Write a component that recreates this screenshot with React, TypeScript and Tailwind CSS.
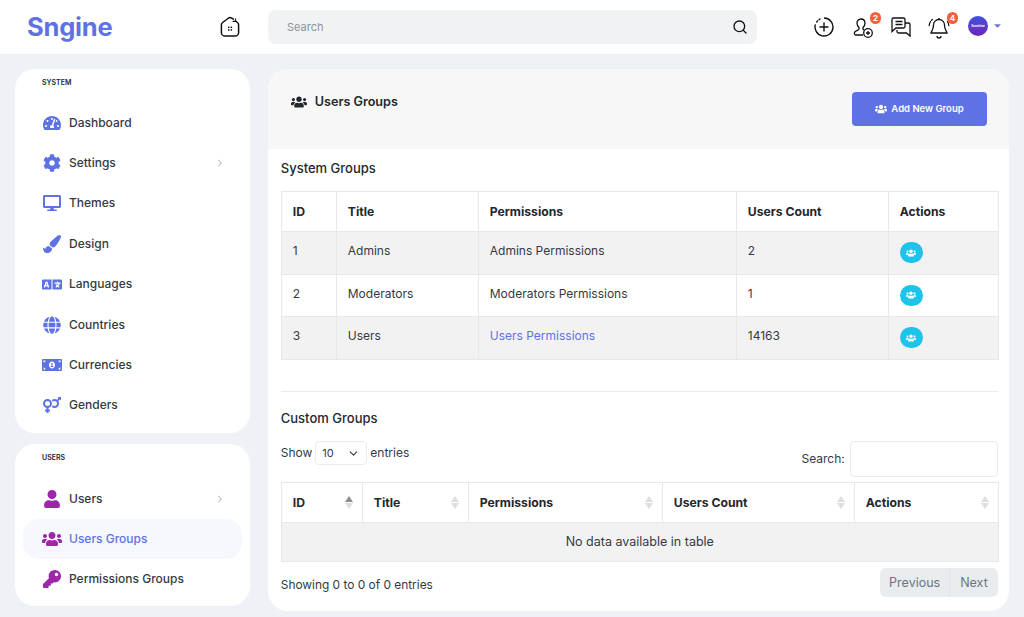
import { ReactNode } from "react";
import {
  FaTachometerAlt,
  FaCog,
  FaDesktop,
  FaPaintBrush,
  FaLanguage,
  FaGlobe,
  FaMoneyBillAlt,
  FaVenusMars,
  FaUser,
  FaUsers,
  FaKey,
  FaChevronRight,
  FaCaretDown,
} from "react-icons/fa";
import { ChevronDown, Search } from "lucide-react";
import type { IconType } from "react-icons";

const systemLinks: { label: string; icon: IconType; arrow?: boolean; size?: number }[] = [
  { label: "Dashboard", icon: FaTachometerAlt },
  { label: "Settings", icon: FaCog, arrow: true },
  { label: "Themes", icon: FaDesktop },
  { label: "Design", icon: FaPaintBrush },
  { label: "Languages", icon: FaLanguage, size: 21 },
  { label: "Countries", icon: FaGlobe },
  { label: "Currencies", icon: FaMoneyBillAlt, size: 20 },
  { label: "Genders", icon: FaVenusMars },
];

const userLinks: { label: string; icon: IconType; arrow?: boolean; active?: boolean; size?: number }[] = [
  { label: "Users", icon: FaUser, arrow: true },
  { label: "Users Groups", icon: FaUsers, active: true, size: 20 },
  { label: "Permissions Groups", icon: FaKey },
];

const systemGroups = [
  { id: 1, title: "Admins", permissions: "Admins Permissions", count: 2 },
  { id: 2, title: "Moderators", permissions: "Moderators Permissions", count: 1 },
  { id: 3, title: "Users", permissions: "Users Permissions", count: 14163, link: true },
];

function Badge({ children }: { children: ReactNode }) {
  return (
    <span className="absolute -right-[2px] -top-[3px] flex h-[12px] w-[11px] items-center justify-center rounded-full bg-[#f2603c] text-[8px] font-bold leading-none text-white">
      {children}
    </span>
  );
}

function SideLink({
  label,
  icon: Icon,
  arrow,
  active,
  color,
  size = 18,
}: {
  label: string;
  icon: IconType;
  arrow?: boolean;
  active?: boolean;
  color: string;
  size?: number;
}) {
  return (
    <div
      className={`flex h-[40.4px] items-center rounded-2xl pl-[19px] pr-[18px] ${active ? "bg-[#f5f8fd] text-[#5e72e4]" : "text-[#333a44]"}`}
    >
      <span className={`flex w-[20px] justify-center ${color}`}>
        <Icon size={size} />
      </span>
      <span className="ml-[7px] flex-1 text-[12px] font-medium">{label}</span>
      {arrow && <FaChevronRight size={8} className="text-[#c4c8cc]" />}
    </div>
  );
}

function SortHead({ label, width, asc }: { label: string; width: string; asc?: boolean }) {
  return (
    <th className={`${width} relative border border-[#e6e8eb] pl-[11px] pt-[1px] text-left text-[12.2px] font-bold text-[#23272e]`}>
      {label}
      <span className="absolute right-[9px] top-[13px] flex flex-col items-center gap-[1px]">
        <span className={`h-0 w-0 border-x-[4px] border-b-[6px] border-x-transparent ${asc ? "border-b-[#8a8d91]" : "border-b-[#dcdee0]"}`} />
        <span className="h-0 w-0 border-x-[4px] border-t-[6px] border-x-transparent border-t-[#dcdee0]" />
      </span>
    </th>
  );
}

export default function App() {
  return (
    <div className="h-[617px] overflow-hidden bg-[#eef1f6] font-['Inter','Noto_Sans',sans-serif] text-[#333a44]">
      {/* Header */}
      <header className="flex h-[54px] items-center bg-white">
        <div className="w-[219px] pl-[27px] text-[25.5px] font-bold leading-none tracking-[-0.2px] text-[#5e72e4]">Sngine</div>
        <div className="flex w-[49px] justify-start">
          <svg width="22" height="22" viewBox="0 0 22 22" fill="none" stroke="#111" strokeWidth="1.5">
            <path d="M14.5 3.2 12.4 2a2.6 2.6 0 0 0-2.8 0L3.6 6.5A3 3 0 0 0 2.4 9v7.5a3.6 3.6 0 0 0 3.6 3.6h10a3.6 3.6 0 0 0 3.6-3.6V9a3 3 0 0 0-1.2-2.5l-1.2-1" strokeLinecap="round" />
            <path d="M16.6 2.4v3h-3" strokeWidth="1.1" />
            <g fill="#111" stroke="none">
              <rect x="9" y="10.6" width="1.5" height="1.5" />
              <rect x="11.6" y="10.6" width="1.5" height="1.5" />
              <rect x="9" y="13.2" width="1.5" height="1.5" />
              <rect x="11.6" y="13.2" width="1.5" height="1.5" />
            </g>
          </svg>
        </div>
        <div className="flex h-[34px] w-[489px] items-center justify-between rounded-lg bg-[#f1f2f3] pl-[19px] pr-[9px]">
          <span className="text-[11px] text-[#8f9296]">Search</span>
          <Search size={16} className="text-[#111]" />
        </div>
        <div className="ml-[57px] flex items-center">
          <svg width="20" height="20" viewBox="0 0 20 20" fill="none" stroke="#111" strokeWidth="1.4">
            <path d="M10 1a9 9 0 1 1-8.6 6.4" />
            <path d="M2.7 5 3.6 3.9M5 2.7l1-.7" strokeLinecap="round" />
            <path d="M10 6v8M6 10h8" strokeLinecap="round" />
          </svg>
          <div className="relative ml-[19px] h-[24px] w-[26px]">
            <svg width="22" height="22" viewBox="0 0 22 22" fill="none" stroke="#111" strokeWidth="1.3" className="mt-[2px]">
              <path d="M8 2c2.6 0 4 2 4 4.2 0 2-1 3.5-2 4.4v1.4c0 .6.6 1 1.2 1.2M8 2C5.4 2 4 4 4 6.2c0 2 1 3.5 2 4.4V12c0 1-3 1.5-4.200 3-.6.8-.6 3 .6 3H10" />
              <circle cx="15" cy="16" r="4.300" />
              <path d="M15 14v4M13 16h4" />
            </svg>
            <Badge>2</Badge>
          </div>
          <svg width="22" height="22" viewBox="0 0 22 22" fill="none" stroke="#111" strokeWidth="1.3" className="ml-[11px]">
            <path d="M3.500 2h10A1.500 1.500 0 0 1 15 3.500v7a1.500 1.500 0 0 1-1.500 1.500H6l-4 3.500V3.500A1.500 1.500 0 0 1 3.500 2Z" />
            <path d="M5.500 5.500h7M5.500 8.500h7" />
            <path d="M15 7h3.500A1.500 1.500 0 0 1 20 8.500V20l-3.500-3H8.500A1.500 1.500 0 0 1 7 15.500V14" />
          </svg>
          <div className="relative ml-[16px] h-[24px] w-[28px]">
            <svg width="22" height="22" viewBox="0 0 22 22" fill="none" stroke="#111" strokeWidth="1.3" className="mt-[2px]">
              <path d="M11 2.500a5.500 5.500 0 0 0-5.500 5.500c0 5-2 6-2.500 8h16c-.5-2-2.500-3-2.500-8A5.500 5.500 0 0 0 11 2.500Z" />
              <path d="M9 19a2 2 0 0 0 4 0M11 1v1.500" />
              <path d="M2.500 4.500C1.700 5.800 1.300 7 1.200 8.500M4.300 2.500 3.600 3.200M19.500 4.500c.8 1.300 1.200 2.500 1.300 4" strokeLinecap="round" />
            </svg>
            <Badge>4</Badge>
          </div>
          <div className="ml-[12px] -mt-[2px] flex h-[20px] w-[20px] items-center justify-center rounded-full bg-gradient-to-b from-[#3b4fe0] to-[#6d22b8] text-[3px] font-bold text-white">
            Sunshine
          </div>
          <FaCaretDown size={11} className="-mt-[3px] ml-[4px] text-[#6e78d8]" />
        </div>
      </header>

      <div className="flex gap-[18px] px-[15px] pt-[15px]">
        {/* Sidebar */}
        <aside className="flex w-[235px] flex-col gap-[11px]">
          <div className="h-[364px] rounded-[20px] bg-white px-[8px] pt-[10px]">
            <div className="pb-[15px] pl-[19px] text-[7px] font-semibold leading-[8px] text-[#23272e]">SYSTEM</div>
            <div className="pt-[0.5px]">
              {systemLinks.map((l) => (
                <SideLink key={l.label} {...l} color="text-[#5e72e4]" />
              ))}
            </div>
          </div>
          <div className="h-[162px] rounded-[20px] bg-white px-[8px] pt-[10px]">
            <div className="pb-[15px] pl-[19px] text-[7px] font-semibold leading-[8px] text-[#23272e]">USERS</div>
            <div className="pt-[1.5px]">
              {userLinks.map((l) => (
                <SideLink key={l.label} {...l} color="text-[#9c27a8]" />
              ))}
            </div>
          </div>
        </aside>

        {/* Main */}
        <main className="h-[542px] w-[742px] overflow-hidden rounded-[20px] bg-white">
          <div className="flex h-[80px] justify-between bg-[#f7f7f7] pl-[23px] pr-[23px]">
            <div className="flex items-center gap-[8px] self-start pt-[24px] text-[12.6px] font-semibold text-[#23272e]">
              <FaUsers size={16} />
              Users Groups
            </div>
            <div className="mr-[-1px] mt-[23px] flex h-[34px] w-[135px] items-center justify-center gap-[4px] rounded bg-[#5e72e4] text-[9.5px] font-semibold text-white">
              <FaUsers size={12} />
              Add New Group
            </div>
          </div>

          <div className="px-[13px]">
            <div className="flex h-[32px] items-end pb-[3px] text-[13px] font-medium text-[#23272e]">System Groups</div>
            <table className="mt-[10px] w-[717px] table-fixed border-collapse text-[12px]">
              <thead>
                <tr className="h-[40px]">
                  {[
                    ["ID", "w-[55px]"],
                    ["Title", "w-[142px]"],
                    ["Permissions", "w-[258px]"],
                    ["Users Count", "w-[152px]"],
                    ["Actions", "w-[110px]"],
                  ].map(([h, w]) => (
                    <th key={h} className={`${w} border border-[#e6e8eb] pl-[11px] pt-[1px] text-left text-[12.2px] font-bold text-[#23272e]`}>
                      {h}
                    </th>
                  ))}
                </tr>
              </thead>
              <tbody>
                {systemGroups.map((g, i) => (
                  <tr key={g.id} className={`h-[42.500px] ${i % 2 === 0 ? "bg-[#f2f2f2]" : "bg-white"}`}>
                    <td className="border border-[#e6e8eb] pb-[3px] pl-[11px]">{g.id}</td>
                    <td className="border border-[#e6e8eb] pb-[3px] pl-[11px]">{g.title}</td>
                    <td className={`border border-[#e6e8eb] pb-[3px] pl-[11px] ${g.link ? "text-[#5e72e4]" : ""}`}>{g.permissions}</td>
                    <td className="border border-[#e6e8eb] pb-[3px] pl-[11px]">{g.count}</td>
                    <td className="border border-[#e6e8eb] pl-[11px]">
                      <span className="flex h-[21px] w-[23px] items-center justify-center rounded-full bg-[#1cc4ea] text-white">
                        <FaUsers size={10} />
                      </span>
                    </td>
                  </tr>
                ))}
              </tbody>
            </table>

            <div className="mt-[31px] w-[717px] border-t border-[#e9ebee]" />

            <div className="pt-[17px] text-[13px] font-medium text-[#23272e]">Custom Groups</div>

            <div className="flex w-[717px] items-start justify-between pt-[6px] text-[12px]">
              <div className="flex items-center gap-[3px] pt-[7px]">
                Show
                <span className="flex h-[24px] w-[52px] items-center justify-between rounded border border-[#e9ebee] px-[6px] text-[11px]">
                  10
                  <ChevronDown size={13} />
                </span>
                entries
              </div>
              <div className="flex items-center gap-[5px] pt-[7px]">
                Search:
                <span className="h-[36px] w-[148px] rounded border border-[#e9ebee] bg-white" />
              </div>
            </div>

            <table className="mt-[5px] w-[717px] table-fixed border-collapse text-[12px]">
              <thead>
                <tr className="h-[40px]">
                  <SortHead label="ID" width="w-[81px]" asc />
                  <SortHead label="Title" width="w-[106px]" />
                  <SortHead label="Permissions" width="w-[194px]" />
                  <SortHead label="Users Count" width="w-[192px]" />
                  <SortHead label="Actions" width="w-[144px]" />
                </tr>
              </thead>
              <tbody>
                <tr className="h-[39px] bg-[#f2f2f2]">
                  <td colSpan={5} className="border border-[#e6e8eb] text-center text-[12.5px]">
                    No data available in table
                  </td>
                </tr>
              </tbody>
            </table>

            <div className="flex w-[717px] items-start justify-between pt-[6px] text-[11.9px]">
              <span className="pt-[8px]">Showing 0 to 0 of 0 entries</span>
              <div className="flex h-[29px] items-center rounded-md bg-[#e9ecef] text-[12.5px] text-[#6c757d]">
                <span className="border-r border-[#dee2e6] px-[9px] leading-[29px]">Previous</span>
                <span className="px-[10px] leading-[29px]">Next</span>
              </div>
            </div>
          </div>
        </main>
      </div>
    </div>
  );
}
